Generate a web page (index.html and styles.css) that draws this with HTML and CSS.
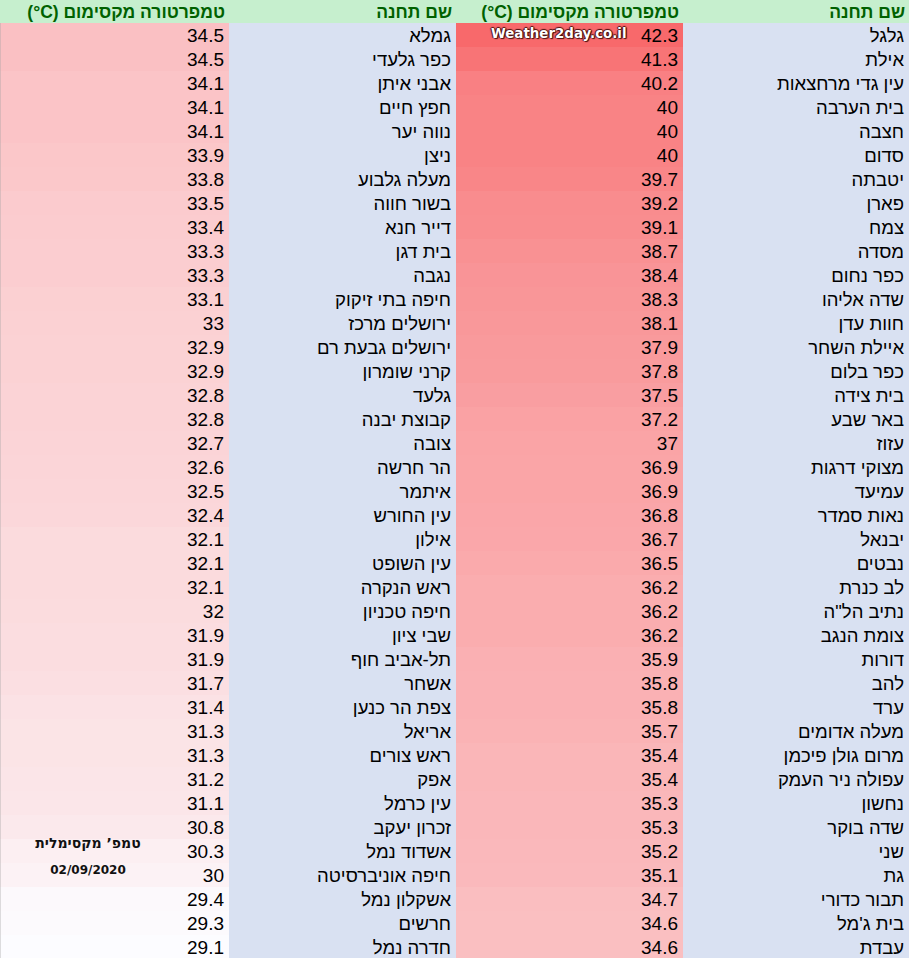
FILE: index.html
```html
<!DOCTYPE html>
<html lang="he">
<head>
<meta charset="utf-8">
<title>טמפרטורה מקסימום</title>
<link rel="stylesheet" href="styles.css">
</head>
<body>
<div class="sheet">
<table class="grid" dir="rtl">
<colgroup><col class="c-name1"><col class="c-temp1"><col class="c-name2"><col class="c-temp2"></colgroup>
<thead>
<tr><th>שם תחנה</th><th>טמפרטורה מקסימום <bdi dir="ltr">(°C)</bdi></th><th>שם תחנה</th><th>טמפרטורה מקסימום <bdi dir="ltr">(°C)</bdi></th></tr>
</thead>
<tbody>
<tr><td class="name">גלגל</td><td class="temp" style="background:rgb(248,105,107)">42.3</td><td class="name">גמלא</td><td class="temp" style="background:rgb(250,192,195)">34.5</td></tr>
<tr><td class="name">אילת</td><td class="temp" style="background:rgb(248,116,118)">41.3</td><td class="name">כפר גלעדי</td><td class="temp" style="background:rgb(250,192,195)">34.5</td></tr>
<tr><td class="name">עין גדי מרחצאות</td><td class="temp" style="background:rgb(249,128,131)">40.2</td><td class="name">אבני איתן</td><td class="temp" style="background:rgb(251,196,199)">34.1</td></tr>
<tr><td class="name">בית הערבה</td><td class="temp" style="background:rgb(249,131,133)">40</td><td class="name">חפץ חיים</td><td class="temp" style="background:rgb(251,196,199)">34.1</td></tr>
<tr><td class="name">חצבה</td><td class="temp" style="background:rgb(249,131,133)">40</td><td class="name">נווה יער</td><td class="temp" style="background:rgb(251,196,199)">34.1</td></tr>
<tr><td class="name">סדום</td><td class="temp" style="background:rgb(249,131,133)">40</td><td class="name">ניצן</td><td class="temp" style="background:rgb(251,199,201)">33.9</td></tr>
<tr><td class="name">יטבתה</td><td class="temp" style="background:rgb(249,134,136)">39.7</td><td class="name">מעלה גלבוע</td><td class="temp" style="background:rgb(251,200,202)">33.8</td></tr>
<tr><td class="name">פארן</td><td class="temp" style="background:rgb(249,140,142)">39.2</td><td class="name">בשור חווה</td><td class="temp" style="background:rgb(251,203,206)">33.5</td></tr>
<tr><td class="name">צמח</td><td class="temp" style="background:rgb(249,141,143)">39.1</td><td class="name">דייר חנא</td><td class="temp" style="background:rgb(251,204,207)">33.4</td></tr>
<tr><td class="name">מסדה</td><td class="temp" style="background:rgb(249,145,147)">38.7</td><td class="name">בית דגן</td><td class="temp" style="background:rgb(251,205,208)">33.3</td></tr>
<tr><td class="name">כפר נחום</td><td class="temp" style="background:rgb(249,148,151)">38.4</td><td class="name">נגבה</td><td class="temp" style="background:rgb(251,205,208)">33.3</td></tr>
<tr><td class="name">שדה אליהו</td><td class="temp" style="background:rgb(249,150,152)">38.3</td><td class="name">חיפה בתי זיקוק</td><td class="temp" style="background:rgb(251,208,210)">33.1</td></tr>
<tr><td class="name">חוות עדן</td><td class="temp" style="background:rgb(249,152,154)">38.1</td><td class="name">ירושלים מרכז</td><td class="temp" style="background:rgb(251,209,211)">33</td></tr>
<tr><td class="name">איילת השחר</td><td class="temp" style="background:rgb(249,154,156)">37.9</td><td class="name">ירושלים גבעת רם</td><td class="temp" style="background:rgb(251,210,212)">32.9</td></tr>
<tr><td class="name">כפר בלום</td><td class="temp" style="background:rgb(249,155,157)">37.8</td><td class="name">קרני שומרון</td><td class="temp" style="background:rgb(251,210,212)">32.9</td></tr>
<tr><td class="name">בית צידה</td><td class="temp" style="background:rgb(249,158,161)">37.5</td><td class="name">גלעד</td><td class="temp" style="background:rgb(251,211,214)">32.8</td></tr>
<tr><td class="name">באר שבע</td><td class="temp" style="background:rgb(250,162,164)">37.2</td><td class="name">קבוצת יבנה</td><td class="temp" style="background:rgb(251,211,214)">32.8</td></tr>
<tr><td class="name">עזוז</td><td class="temp" style="background:rgb(250,164,166)">37</td><td class="name">צובה</td><td class="temp" style="background:rgb(251,212,215)">32.7</td></tr>
<tr><td class="name">מצוקי דרגות</td><td class="temp" style="background:rgb(250,165,167)">36.9</td><td class="name">הר חרשה</td><td class="temp" style="background:rgb(251,213,216)">32.6</td></tr>
<tr><td class="name">עמיעד</td><td class="temp" style="background:rgb(250,165,167)">36.9</td><td class="name">איתמר</td><td class="temp" style="background:rgb(251,214,217)">32.5</td></tr>
<tr><td class="name">נאות סמדר</td><td class="temp" style="background:rgb(250,166,169)">36.8</td><td class="name">עין החורש</td><td class="temp" style="background:rgb(251,215,218)">32.4</td></tr>
<tr><td class="name">יבנאל</td><td class="temp" style="background:rgb(250,167,170)">36.7</td><td class="name">אילון</td><td class="temp" style="background:rgb(251,219,221)">32.1</td></tr>
<tr><td class="name">נבטים</td><td class="temp" style="background:rgb(250,170,172)">36.5</td><td class="name">עין השופט</td><td class="temp" style="background:rgb(251,219,221)">32.1</td></tr>
<tr><td class="name">לב כנרת</td><td class="temp" style="background:rgb(250,173,175)">36.2</td><td class="name">ראש הנקרה</td><td class="temp" style="background:rgb(251,219,221)">32.1</td></tr>
<tr><td class="name">נתיב הל"ה</td><td class="temp" style="background:rgb(250,173,175)">36.2</td><td class="name">חיפה טכניון</td><td class="temp" style="background:rgb(251,220,222)">32</td></tr>
<tr><td class="name">צומת הנגב</td><td class="temp" style="background:rgb(250,173,175)">36.2</td><td class="name">שבי ציון</td><td class="temp" style="background:rgb(251,221,224)">31.9</td></tr>
<tr><td class="name">דורות</td><td class="temp" style="background:rgb(250,176,179)">35.9</td><td class="name">תל-אביב חוף</td><td class="temp" style="background:rgb(251,221,224)">31.9</td></tr>
<tr><td class="name">להב</td><td class="temp" style="background:rgb(250,177,180)">35.8</td><td class="name">אשחר</td><td class="temp" style="background:rgb(251,223,226)">31.7</td></tr>
<tr><td class="name">ערד</td><td class="temp" style="background:rgb(250,177,180)">35.8</td><td class="name">צפת הר כנען</td><td class="temp" style="background:rgb(251,226,229)">31.4</td></tr>
<tr><td class="name">מעלה אדומים</td><td class="temp" style="background:rgb(250,179,181)">35.7</td><td class="name">אריאל</td><td class="temp" style="background:rgb(251,228,230)">31.3</td></tr>
<tr><td class="name">מרום גולן פיכמן</td><td class="temp" style="background:rgb(250,182,184)">35.4</td><td class="name">ראש צורים</td><td class="temp" style="background:rgb(251,228,230)">31.3</td></tr>
<tr><td class="name">עפולה ניר העמק</td><td class="temp" style="background:rgb(250,182,184)">35.4</td><td class="name">אפק</td><td class="temp" style="background:rgb(251,229,232)">31.2</td></tr>
<tr><td class="name">נחשון</td><td class="temp" style="background:rgb(250,183,186)">35.3</td><td class="name">עין כרמל</td><td class="temp" style="background:rgb(251,230,233)">31.1</td></tr>
<tr><td class="name">שדה בוקר</td><td class="temp" style="background:rgb(250,183,186)">35.3</td><td class="name">זכרון יעקב</td><td class="temp" style="background:rgb(251,233,236)">30.8</td></tr>
<tr><td class="name">שני</td><td class="temp" style="background:rgb(250,184,187)">35.2</td><td class="name">אשדוד נמל</td><td class="temp" style="background:rgb(252,239,242)">30.3</td></tr>
<tr><td class="name">גת</td><td class="temp" style="background:rgb(250,185,188)">35.1</td><td class="name">חיפה אוניברסיטה</td><td class="temp" style="background:rgb(252,242,245)">30</td></tr>
<tr><td class="name">תבור כדורי</td><td class="temp" style="background:rgb(250,190,192)">34.7</td><td class="name">אשקלון נמל</td><td class="temp" style="background:rgb(252,249,252)">29.4</td></tr>
<tr><td class="name">בית ג'מל</td><td class="temp" style="background:rgb(250,191,193)">34.6</td><td class="name">חרשים</td><td class="temp" style="background:rgb(252,250,253)">29.3</td></tr>
<tr><td class="name">עבדת</td><td class="temp" style="background:rgb(250,191,193)">34.6</td><td class="name">חדרה נמל</td><td class="temp" style="background:rgb(252,252,255)">29.1</td></tr>
</tbody>
</table>
<div class="watermark">Weather2day.co.il</div>
<div class="caption" dir="rtl">
<div class="caption-title">טמפ’ מקסימלית</div>
<div class="caption-date">02/09/2020</div>
</div>
</div>
</body>
</html>
```
FILE: styles.css
```css
html, body {
  margin: 0;
  padding: 0;
  background: #ffffff;
}

.sheet {
  position: relative;
  width: 909px;
  height: 958px;
  overflow: hidden;
}

.grid {
  border-collapse: collapse;
  table-layout: fixed;
  width: 909px;
  font-family: "Liberation Sans", Arial, sans-serif;
  font-size: 19px;
  color: #000;
}

.c-name1 { width: 226px; }
.c-temp1 { width: 227px; }
.c-name2 { width: 227px; }
.c-temp2 { width: 229px; }

.grid th {
  height: 23px;
  padding: 2px 4px 0 4px;
  box-sizing: border-box;
  background: #c6efce;
  color: #006100;
  font-size: 17.5px;
  font-weight: bold;
  text-align: right;
  line-height: 21px;
  white-space: nowrap;
  vertical-align: bottom;
}

.grid td {
  height: 24px;
  padding: 1px 5px 0 4px;
  box-sizing: border-box;
  line-height: 23px;
  text-align: right;
  white-space: nowrap;
  overflow: hidden;
}

.grid td.name {
  background: #d9e1f2;
  font-size: 18.5px;
}

.grid td.temp:last-child {
  background-clip: padding-box;
  box-shadow: inset 1px 0 0 rgba(160, 160, 160, 0.35);
}

.watermark {
  position: absolute;
  top: 26px;
  left: 491px;
  font-family: "DejaVu Sans", Verdana, sans-serif;
  font-weight: bold;
  font-size: 13.4px;
  color: #ffffff;
  text-shadow: 1px 1px 1px #4a1010, -1px 0 1px #4a1010, 0 -1px 1px #4a1010, 1px 0 1px #4a1010;
}

.caption {
  position: absolute;
  left: 0;
  top: 835px;
  width: 176px;
  font-family: "DejaVu Sans", Verdana, sans-serif;
  font-weight: bold;
  color: #111;
  text-align: center;
  display: flex;
  flex-direction: column;
  gap: 12px;
}

.caption-title {
  font-size: 14px;
  line-height: 16px;
}

.caption-date {
  font-size: 12px;
  line-height: 14px;
}
```
